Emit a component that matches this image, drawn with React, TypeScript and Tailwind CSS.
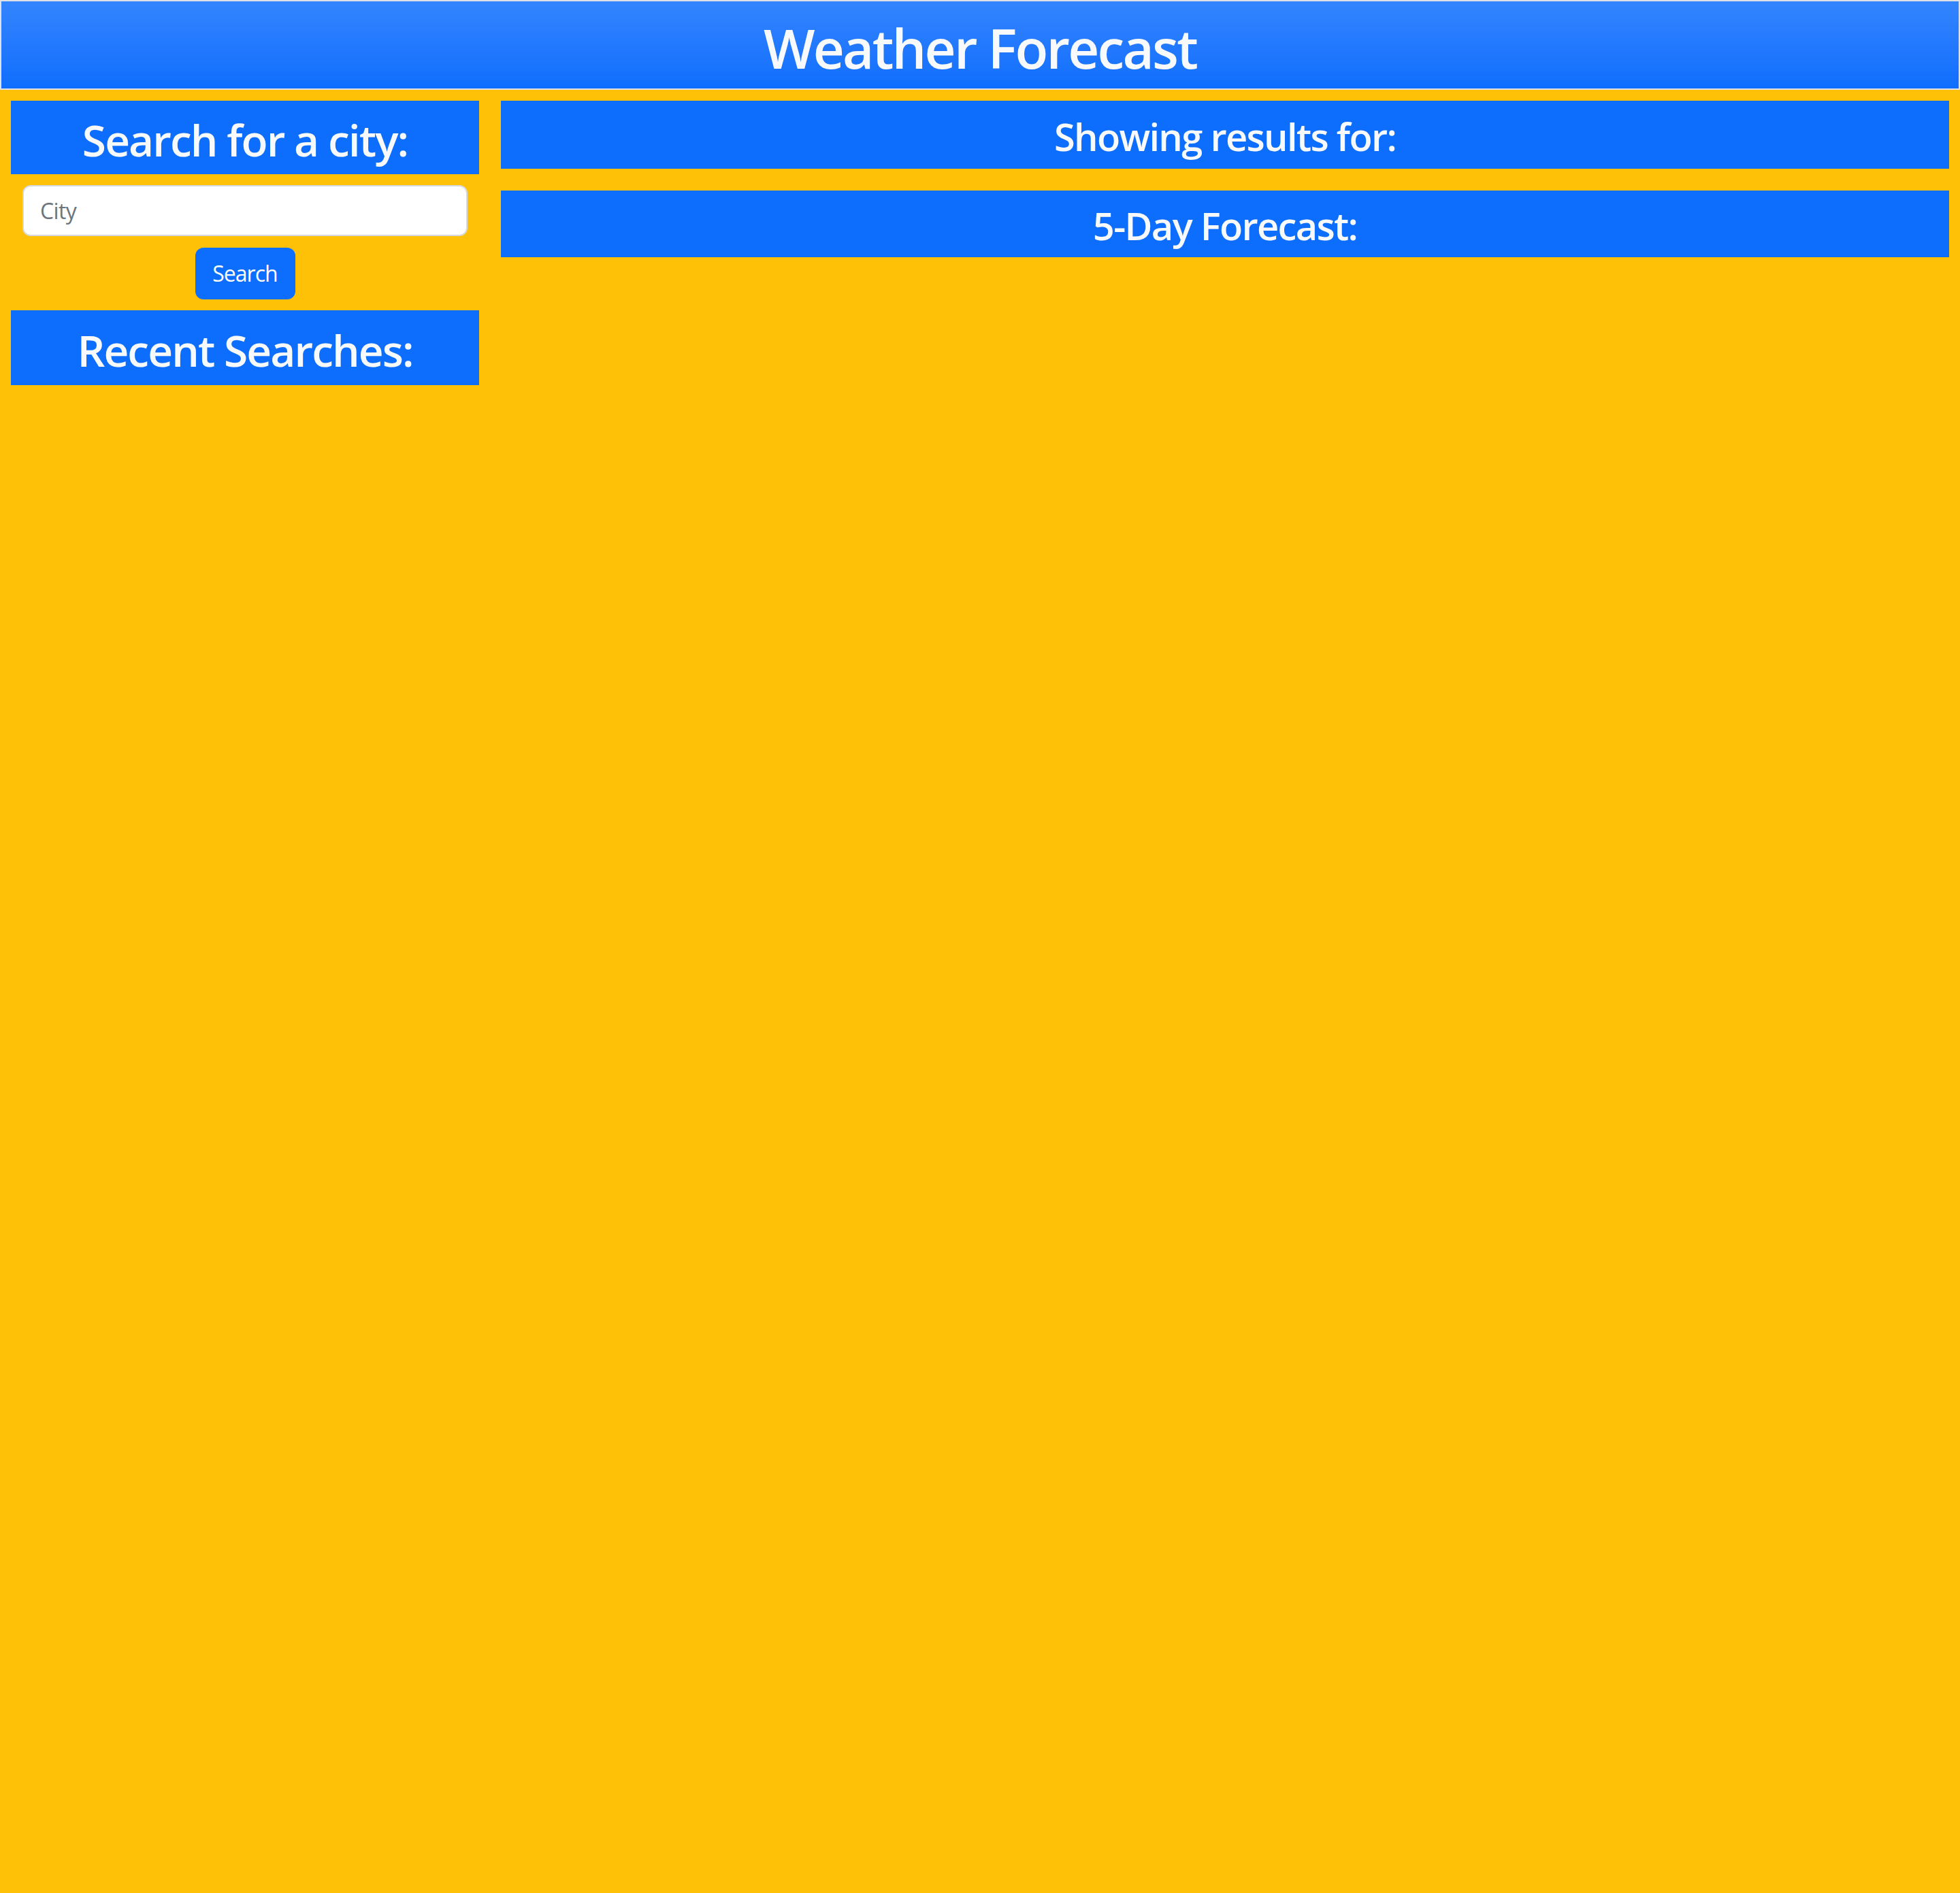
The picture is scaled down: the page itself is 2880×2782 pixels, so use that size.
export default function App() {
  return (
    <div className="min-h-screen bg-[#ffc107] font-['Open_Sans','Noto_Sans',sans-serif] text-[#f8f9fa]">
      {/* header */}
      <header className="h-[132px] border-2 border-[#dee2e6] bg-gradient-to-b from-[#3384fe] to-[#0d6efd] flex items-center justify-center">
        <h1 className="text-[80px] font-semibold tracking-[-0.035em] leading-none pt-2">Weather Forecast</h1>
      </header>

      <div className="flex">
        {/* left column */}
        <aside className="w-[720px] shrink-0 px-4 pt-4 flex flex-col">
          <div className="h-[108px] bg-[#0d6efd] flex items-center justify-center">
            <h2 className="text-[64px] font-semibold tracking-[-0.03em] leading-none pt-2">Search for a city:</h2>
          </div>
          <input
            type="text"
            placeholder="City"
            className="mt-4 mx-[17px] h-[75px] rounded-xl border-2 border-[#d6d9dc] bg-white px-6 text-[32px] tracking-[-0.02em] text-[#212529] placeholder:text-[#6c757d] outline-none"
          />
          <button className="mt-[17px] mx-auto h-[76px] w-[147px] rounded-xl bg-[#0d6efd] text-[32px] tracking-[-0.03em] text-white">
            Search
          </button>
          <div className="mt-4 h-[110px] bg-[#0d6efd] flex items-center justify-center">
            <h2 className="text-[64px] font-semibold tracking-[-0.03em] leading-none pt-2">Recent Searches:</h2>
          </div>
        </aside>

        {/* right column */}
        <main className="flex-1 px-4 pt-4 flex flex-col gap-8">
          <div className="h-[100px] bg-[#0d6efd] flex items-center justify-center">
            <h3 className="text-[56px] font-semibold tracking-[-0.03em] leading-none pt-1">Showing results for:</h3>
          </div>
          <div className="h-[98px] bg-[#0d6efd] flex items-center justify-center">
            <h3 className="text-[56px] font-semibold tracking-[-0.03em] leading-none pt-1">5-Day Forecast:</h3>
          </div>
        </main>
      </div>
    </div>
  );
}
